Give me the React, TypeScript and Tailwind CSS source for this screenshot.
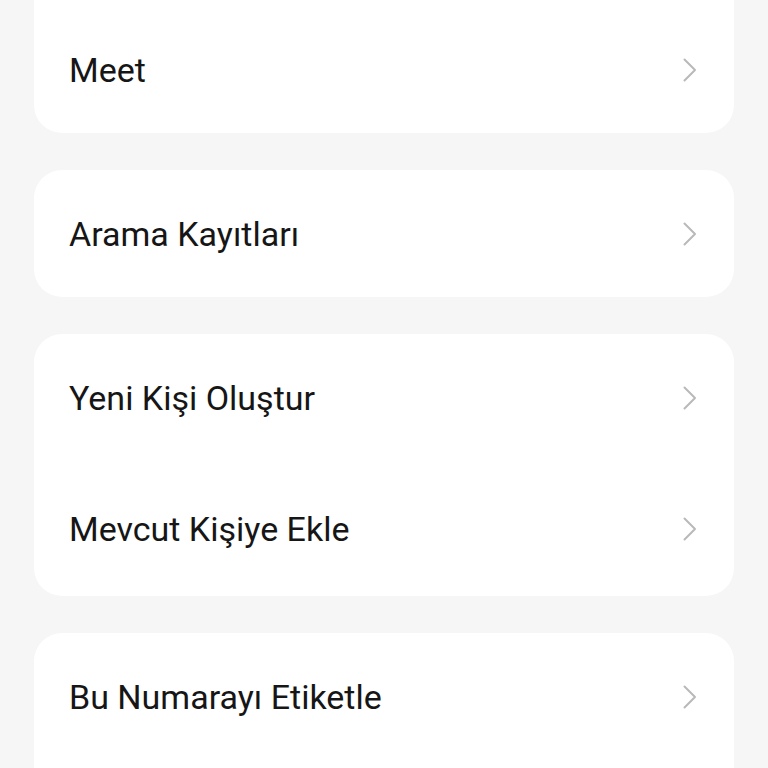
const Chevron = () => (
  <svg width="16" height="26" viewBox="0 0 16 26" fill="none" className="shrink-0">
    <path d="M2.5 2.5 L13 13 L2.5 23.5" stroke="#b9b9b9" strokeWidth="2" strokeLinecap="round" strokeLinejoin="round" />
  </svg>
);

function Row({ label, h = "h-[127px]" }: { label: string; h?: string }) {
  return (
    <div className={`flex items-center justify-between pl-[35px] pr-[36px] ${h}`}>
      <span className="text-[34px] text-[#161616] pt-[2px]">{label}</span>
      <Chevron />
    </div>
  );
}

export default function App() {
  return (
    <div
      className="h-[768px] overflow-hidden bg-[#f6f6f6] px-[34px]"
      style={{ fontFamily: "Roboto, 'Noto Sans', sans-serif" }}
    >
      <div className="flex flex-col gap-[37px] mt-[-10px]">
        <div className="bg-white rounded-b-[28px] pt-[16px]">
          <Row label="Meet" />
        </div>
        <div className="bg-white rounded-[28px]">
          <Row label="Arama Kayıtları" />
        </div>
        <div className="bg-white rounded-[28px]">
          <Row label="Yeni Kişi Oluştur" h="h-[127px]" />
          <Row label="Mevcut Kişiye Ekle" h="h-[135px]" />
        </div>
        <div className="bg-white rounded-[28px]">
          <Row label="Bu Numarayı Etiketle" />
          <Row label="" />
        </div>
      </div>
    </div>
  );
}
